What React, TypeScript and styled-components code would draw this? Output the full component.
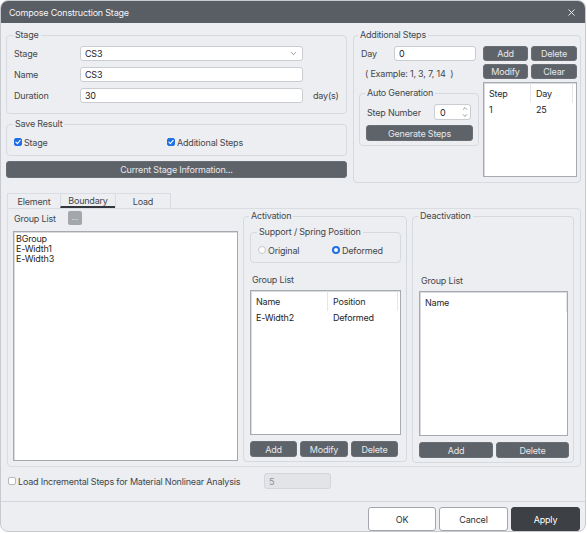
import React from 'react';
import styled, { createGlobalStyle } from 'styled-components';
import { X, ChevronDown, ChevronUp } from 'lucide-react';

const Global = createGlobalStyle`
  html, body { margin: 0; padding: 0; background: #ffffff; }
  body { font-family: Inter, "Liberation Sans", sans-serif; font-size: 9px; letter-spacing: -0.2px; color: #44474c; }
  * { box-sizing: border-box; }
  input, button { font-family: inherit; letter-spacing: -0.2px; }
`;

const Window = styled.div`
  width: 586px;
  height: 532px;
  background: #eceef1;
  border: 1px solid #c7cacf;
  border-radius: 8px;
  overflow: hidden;
  display: flex;
  flex-direction: column;
`;

const TitleBar = styled.div`
  height: 22px;
  flex: none;
  background: #595d64;
  color: #f4f5f7;
  display: flex;
  align-items: center;
  justify-content: space-between;
  padding: 0 8px 0 8px;
  font-size: 9px;
  letter-spacing: -0.2px;
`;

const CloseIcon = styled(X)`
  width: 11px;
  height: 11px;
  color: #f4f5f7;
`;

const Body = styled.div`
  flex: 1;
  padding: 6px 5px 0 5px;
  display: flex;
  flex-direction: column;
`;

const TopRow = styled.div`
  display: grid;
  grid-template-columns: 341px 228px;
  column-gap: 6px;
  align-items: start;
`;

const Column = styled.div`
  display: flex;
  flex-direction: column;
`;

const FieldSet = styled.fieldset<{ $pad: string; $mt?: number }>`
  margin: ${p => p.$mt ?? 0}px 0 0 0;
  min-width: 0;
  border: 1px solid #d6d9dd;
  border-radius: 4px;
  padding: ${p => p.$pad};
`;

const Legend = styled.legend`
  padding: 0 2px;
  margin-left: -1px;
  font-size: 9px;
  line-height: 12px;
  color: #44474c;
`;

const FormGrid = styled.div`
  display: grid;
  grid-template-columns: 66px 223px auto;
  row-gap: 6px;
  align-items: center;
`;

const Label = styled.span<{ $w?: number; $ml?: number }>`
  font-size: 9px;
  color: #44474c;
  white-space: nowrap;
  ${p => (p.$w ? `width: ${p.$w}px; flex: none;` : '')}
  ${p => (p.$ml ? `margin-left: ${p.$ml}px;` : '')}
`;

const TextBox = styled.input<{ $w?: number }>`
  height: 15px;
  ${p => (p.$w ? `width: ${p.$w}px;` : 'width: 100%;')}
  border: 1px solid #c9ccd1;
  border-radius: 3px;
  background: #ffffff;
  padding: 0 4px;
  font-size: 9px;
  color: #1f2125;
  outline: none;
`;

const DisabledBox = styled(TextBox)`
  height: 16px;
  background: #e2e4e8;
  border-color: #d2d5d9;
  color: #8b8e93;
`;

const Combo = styled.div`
  height: 15px;
  border: 1px solid #c9ccd1;
  border-radius: 3px;
  background: #ffffff;
  padding: 0 4px 0 4px;
  display: flex;
  align-items: center;
  justify-content: space-between;
  font-size: 9px;
  color: #1f2125;
`;

const Chevron = styled(ChevronDown)`
  width: 9px;
  height: 9px;
  color: #55585e;
`;

const Unit = styled.span`
  margin-left: 10px;
  color: #44474c;
`;

const CheckRow = styled.div`
  height: 12px;
  display: flex;
  align-items: center;
`;

const CheckItem = styled.label<{ $w?: number }>`
  display: flex;
  align-items: center;
  gap: 2px;
  ${p => (p.$w ? `width: ${p.$w}px;` : '')}
  color: #44474c;
  white-space: nowrap;
`;

const CheckBox = styled.span<{ $on?: boolean }>`
  width: 8px;
  height: 8px;
  border-radius: 2px;
  flex: none;
  display: flex;
  align-items: center;
  justify-content: center;
  background: ${p => (p.$on ? '#1f6fe6' : '#ffffff')};
  border: 1px solid ${p => (p.$on ? '#1f6fe6' : '#b5b8bd')};
`;

const DarkButton = styled.button<{ $h?: number; $mt?: number }>`
  height: ${p => p.$h ?? 16}px;
  margin-top: ${p => p.$mt ?? 0}px;
  background: #5e6269;
  color: #e6e8eb;
  border: 1px solid #6a6e75;
  border-radius: 3px;
  font-size: 9px;
  padding: 0;
  width: 100%;
`;

const SmallDots = styled.button`
  width: 14px;
  height: 14px;
  background: #a3a6ab;
  color: #eef0f2;
  border: none;
  border-radius: 2px;
  font-size: 8px;
  line-height: 8px;
  padding: 0 0 3px 0;
  margin-left: 12px;
`;

const StepsLayout = styled.div`
  display: grid;
  grid-template-columns: 120px 94px;
  column-gap: 4px;
  align-items: start;
`;

const DayRow = styled.div`
  display: flex;
  align-items: center;
  padding-left: 2px;
`;

const Example = styled.div`
  margin-top: 7px;
  padding-left: 6px;
  line-height: 12px;
  color: #44474c;
  white-space: pre;
`;

const SpinRow = styled.div`
  display: flex;
  align-items: center;
  padding-left: 1px;
`;

const Spin = styled.div`
  width: 37px;
  height: 16px;
  border: 1px solid #c9ccd1;
  border-radius: 3px;
  background: #ffffff;
  display: flex;
  align-items: center;
  justify-content: space-between;
  padding: 0 1px 0 5px;
  color: #1f2125;
`;

const SpinArrows = styled.div`
  display: flex;
  flex-direction: column;
  color: #3f4247;
  svg { width: 8px; height: 7px; display: block; }
`;

const ButtonGrid = styled.div`
  display: grid;
  grid-template-columns: 45px 46px;
  column-gap: 3px;
  row-gap: 3px;
`;

const List = styled.div<{ $h: number; $mt?: number }>`
  height: ${p => p.$h}px;
  margin-top: ${p => p.$mt ?? 0}px;
  background: #ffffff;
  border: 1px solid #a6aab0;
  box-shadow: inset 1px 1px 0 #d9dbde;
  overflow: hidden;
`;

const ListHeader = styled.div<{ $cols: string }>`
  display: grid;
  grid-template-columns: ${p => p.$cols};
  height: 20px;
  align-items: stretch;
`;

const HeadCell = styled.div<{ $line?: boolean }>`
  display: flex;
  align-items: center;
  padding-left: 5px;
  color: #26282c;
  border-right: ${p => (p.$line ? '1px solid #e4e6e9' : 'none')};
`;

const ListRow = styled.div<{ $cols: string }>`
  display: grid;
  grid-template-columns: ${p => p.$cols};
  height: 12px;
  align-items: center;
  color: #1f2125;
  & > span { padding-left: 5px; }
`;

const PlainItems = styled.div`
  padding: 2px 0 0 2px;
  line-height: 10px;
  color: #2a1f22;
`;

const TabBar = styled.div`
  display: flex;
  margin: 10px 0 0 1px;
  height: 15px;
`;

const Tab = styled.div<{ $active?: boolean; $w: number }>`
  width: ${p => p.$w}px;
  border: 1px solid #d9dce0;
  border-bottom: ${p => (p.$active ? '2px solid #33363b' : 'none')};
  margin-left: -1px;
  display: flex;
  align-items: center;
  justify-content: center;
  color: #44474c;
  &:first-child { margin-left: 0; }
`;

const Panel = styled.div`
  margin-left: 1px;
  width: 574px;
  height: 259px;
  border: 1px solid #d9dce0;
  border-radius: 0 4px 4px 4px;
  padding: 1px 5px 0 5px;
  display: grid;
  grid-template-columns: 225px 164px 162px;
  column-gap: 5px;
  align-items: start;
`;

const GroupHead = styled.div`
  margin-top: 1px;
  height: 14px;
  display: flex;
  align-items: center;
  padding-left: 1px;
`;

const SubLabel = styled.div<{ $mt: number }>`
  margin-top: ${p => p.$mt}px;
  line-height: 12px;
  padding-left: 2px;
  color: #44474c;
`;

const RadioRow = styled.div`
  height: 12px;
  display: flex;
  align-items: center;
`;

const RadioItem = styled.label<{ $w?: number }>`
  display: flex;
  align-items: center;
  gap: 2px;
  ${p => (p.$w ? `width: ${p.$w}px;` : '')}
  color: #44474c;
`;

const RadioDot = styled.span<{ $on?: boolean }>`
  width: 8px;
  height: 8px;
  border-radius: 50%;
  flex: none;
  background: #ffffff;
  border: ${p => (p.$on ? '2.5px solid #1f6fe6' : '1px solid #c3c6ca')};
`;

const ButtonRow = styled.div<{ $cols: string }>`
  margin-top: 6px;
  display: grid;
  grid-template-columns: ${p => p.$cols};
  column-gap: 3px;
`;

const OptionRow = styled.div`
  margin: 6px 0 0 2px;
  height: 16px;
  display: flex;
  align-items: center;
`;

const Footer = styled.div`
  margin-top: 6px;
  border-top: 1px solid #d3d6da;
  padding: 5px 5px 0 0;
  display: flex;
  justify-content: flex-end;
  gap: 3px;
`;

const FooterButton = styled.button<{ $primary?: boolean; $w: number }>`
  width: ${p => p.$w}px;
  height: 24px;
  border-radius: 3px;
  font-size: 9px;
  background: ${p => (p.$primary ? '#3d4146' : '#ffffff')};
  color: ${p => (p.$primary ? '#ffffff' : '#2e3035')};
  border: 1px solid ${p => (p.$primary ? '#3d4146' : '#a3a7ad')};
`;

const Tick = () => (
  <svg width="6" height="6" viewBox="0 0 10 10">
    <path d="M1.5 5.2 L4 7.6 L8.6 2.4" fill="none" stroke="#ffffff" strokeWidth="1.8" strokeLinecap="round" strokeLinejoin="round" />
  </svg>
);

export default function App() {
  return (
    <>
      <Global />
      <Window>
        <TitleBar>
          <span>Compose Construction Stage</span>
          <CloseIcon strokeWidth={2} />
        </TitleBar>
        <Body>
          <TopRow>
            <Column>
              <FieldSet $pad="5px 7px 10px 7px">
                <Legend>Stage</Legend>
                <FormGrid>
                  <Label>Stage</Label>
                  <Combo>
                    <span>CS3</span>
                    <Chevron strokeWidth={1.6} />
                  </Combo>
                  <span />
                  <Label>Name</Label>
                  <TextBox readOnly value="CS3" />
                  <span />
                  <Label>Duration</Label>
                  <TextBox readOnly value="30" />
                  <Unit>day(s)</Unit>
                </FormGrid>
              </FieldSet>
              <FieldSet $pad="6px 7px 7px 7px" $mt={4}>
                <Legend>Save Result</Legend>
                <CheckRow>
                  <CheckItem $w={153}>
                    <CheckBox $on><Tick /></CheckBox>
                    Stage
                  </CheckItem>
                  <CheckItem>
                    <CheckBox $on><Tick /></CheckBox>
                    Additional Steps
                  </CheckItem>
                </CheckRow>
              </FieldSet>
              <DarkButton $h={17} $mt={5}>Current Stage Information...</DarkButton>
            </Column>

            <FieldSet $pad="5px 3px 5px 5px">
              <Legend>Additional Steps</Legend>
              <StepsLayout>
                <Column>
                  <DayRow>
                    <Label $w={33}>Day</Label>
                    <TextBox readOnly value="0" $w={82} />
                  </DayRow>
                  <Example>{'( Example: 1, 3, 7, 14  )'}</Example>
                  <FieldSet $pad="5px 5px 4px 6px" $mt={7}>
                    <Legend>Auto Generation</Legend>
                    <SpinRow>
                      <Label $w={67}>Step Number</Label>
                      <Spin>
                        <span>0</span>
                        <SpinArrows>
                          <ChevronUp strokeWidth={1.8} />
                          <ChevronDown strokeWidth={1.8} />
                        </SpinArrows>
                      </Spin>
                    </SpinRow>
                    <DarkButton $mt={5}>Generate Steps</DarkButton>
                  </FieldSet>
                </Column>
                <Column>
                  <ButtonGrid>
                    <DarkButton $h={15}>Add</DarkButton>
                    <DarkButton $h={15}>Delete</DarkButton>
                    <DarkButton $h={15}>Modify</DarkButton>
                    <DarkButton $h={15}>Clear</DarkButton>
                  </ButtonGrid>
                  <List $h={95} $mt={3}>
                    <ListHeader $cols="47px 42px">
                      <HeadCell $line>Step</HeadCell>
                      <HeadCell $line>Day</HeadCell>
                    </ListHeader>
                    <ListRow $cols="47px 42px">
                      <span>1</span>
                      <span>25</span>
                    </ListRow>
                  </List>
                </Column>
              </StepsLayout>
            </FieldSet>
          </TopRow>

          <TabBar>
            <Tab $w={54}>Element</Tab>
            <Tab $w={56} $active>Boundary</Tab>
            <Tab $w={56}>Load</Tab>
          </TabBar>
          <Panel>
            <Column>
              <GroupHead>
                <Label>Group List</Label>
                <SmallDots>...</SmallDots>
              </GroupHead>
              <List $h={230} $mt={6}>
                <PlainItems>
                  <div>BGroup</div>
                  <div>E-Width1</div>
                  <div>E-Width3</div>
                </PlainItems>
              </List>
            </Column>

            <FieldSet $pad="4px 5px 4px 6px">
              <Legend>Activation</Legend>
              <FieldSet $pad="6px 5px 6px 7px">
                <Legend>Support / Spring Position</Legend>
                <RadioRow>
                  <RadioItem $w={74}>
                    <RadioDot />
                    Original
                  </RadioItem>
                  <RadioItem>
                    <RadioDot $on />
                    Deformed
                  </RadioItem>
                </RadioRow>
              </FieldSet>
              <SubLabel $mt={11}>Group List</SubLabel>
              <List $h={145} $mt={4}>
                <ListHeader $cols="77px 70px">
                  <HeadCell $line>Name</HeadCell>
                  <HeadCell $line>Position</HeadCell>
                </ListHeader>
                <ListRow $cols="77px 70px">
                  <span>E-Width2</span>
                  <span>Deformed</span>
                </ListRow>
              </List>
              <ButtonRow $cols="47px 48px 47px">
                <DarkButton>Add</DarkButton>
                <DarkButton>Modify</DarkButton>
                <DarkButton>Delete</DarkButton>
              </ButtonRow>
            </FieldSet>

            <FieldSet $pad="4px 5px 4px 6px">
              <Legend>Deactivation</Legend>
              <SubLabel $mt={49}>Group List</SubLabel>
              <List $h={145} $mt={4}>
                <ListHeader $cols="147px">
                  <HeadCell $line>Name</HeadCell>
                </ListHeader>
              </List>
              <ButtonRow $cols="74px 73px">
                <DarkButton>Add</DarkButton>
                <DarkButton>Delete</DarkButton>
              </ButtonRow>
            </FieldSet>
          </Panel>

          <OptionRow>
            <CheckItem $w={256}>
              <CheckBox />
              Load Incremental Steps for Material Nonlinear Analysis
            </CheckItem>
            <DisabledBox readOnly value="5" $w={67} />
          </OptionRow>
        </Body>
        <Footer>
          <FooterButton $w={68}>OK</FooterButton>
          <FooterButton $w={69}>Cancel</FooterButton>
          <FooterButton $w={69} $primary>Apply</FooterButton>
        </Footer>
      </Window>
    </>
  );
}
